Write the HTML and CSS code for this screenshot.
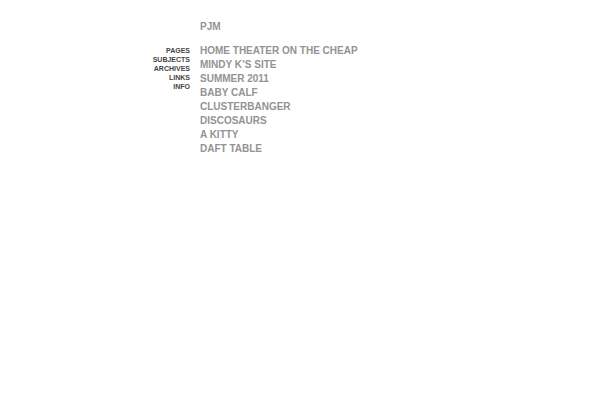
FILE: index.html
```html
<!DOCTYPE html>
<html lang="en">
<head>
    <meta charset="UTF-8">
    <meta name="viewport" content="width=device-width, initial-scale=1.0">
    <title>PJM</title>
    <link rel="stylesheet" href="styles.css">
</head>
<body>
    <div class="page">
        <h1 class="title"><a href="#">PJM</a></h1>
        <nav class="menu">
            <ul>
                <li><a href="#">PAGES</a></li>
                <li><a href="#">SUBJECTS</a></li>
                <li><a href="#">ARCHIVES</a></li>
                <li><a href="#">LINKS</a></li>
                <li><a href="#">INFO</a></li>
            </ul>
        </nav>
        <main class="posts">
            <ul>
                <li><a href="#">HOME THEATER ON THE CHEAP</a></li>
                <li><a href="#">MINDY K’S SITE</a></li>
                <li><a href="#">SUMMER 2011</a></li>
                <li><a href="#">BABY CALF</a></li>
                <li><a href="#">CLUSTERBANGER</a></li>
                <li><a href="#">DISCOSAURS</a></li>
                <li><a href="#">A KITTY</a></li>
                <li><a href="#">DAFT TABLE</a></li>
            </ul>
        </main>
    </div>
</body>
</html>
```
FILE: styles.css
```css
body {
    margin: 0;
    background-color: #fff;
    font-family: "Liberation Sans", Arial, sans-serif;
    font-weight: bold;
}
a {
    color: inherit;
    text-decoration: none;
}
a:hover {
    color: #000;
}
ul {
    list-style: none;
    margin: 0;
    padding: 0;
}
.page {
    display: grid;
    grid-template-columns: 190px 1fr;
    column-gap: 10px;
    padding-top: 20px;
}
.title {
    grid-column: 2;
    margin: 0 0 10px;
    font-size: 10px;
    line-height: 14px;
    color: #939393;
}
.menu {
    padding-top: 2px;
    text-align: right;
    font-size: 7px;
    line-height: 9px;
    color: #444;
}
.posts {
    font-size: 10px;
    line-height: 14px;
    color: #939393;
}
```
